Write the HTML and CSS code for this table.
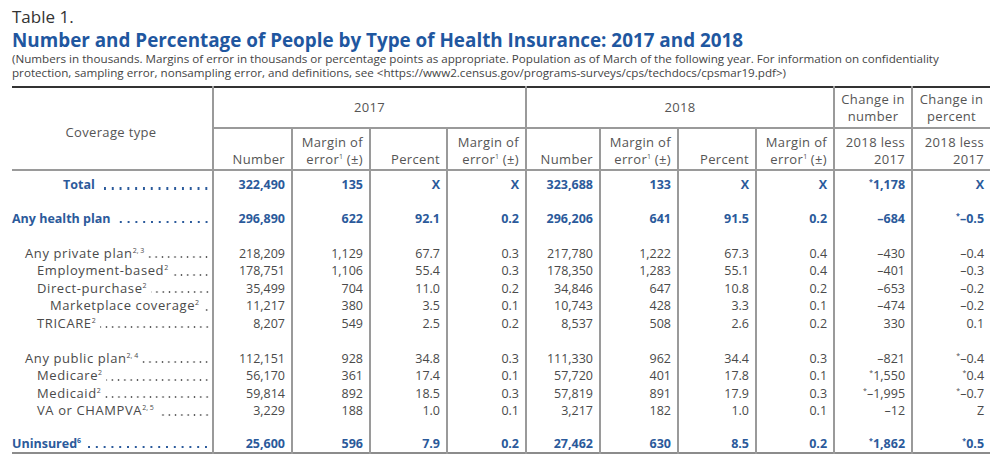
FILE: index.html
```html
<!DOCTYPE html>
<html lang="en">
<head>
<meta charset="utf-8">
<title>Table 1</title>
<link rel="stylesheet" href="styles.css">
</head>
<body>
<div class="page">
  <div class="tnum">Table 1.</div>
  <h1 class="title">Number and Percentage of People by Type of Health Insurance: 2017 and 2018</h1>
  <p class="sub">(Numbers in thousands. Margins of error in thousands or percentage points as appropriate. Population as of March of the following year. For information on confidentiality<br>protection, sampling error, nonsampling error, and definitions, see &lt;https://www2.census.gov/programs-surveys/cps/techdocs/cpsmar19.pdf&gt;)</p>
  <table class="t">
    <colgroup>
      <col class="c-lab"><col class="c79"><col class="c78"><col class="c77"><col class="c79"><col class="c74"><col class="c78"><col class="c78"><col class="c78"><col class="c78"><col class="c78">
    </colgroup>
    <thead>
      <tr class="h1">
        <th rowspan="2" class="cov">Coverage type</th>
        <th colspan="4" class="yr">2017</th>
        <th colspan="4" class="yr">2018</th>
        <th class="yr">Change in<br>number</th>
        <th class="yr">Change in<br>percent</th>
      </tr>
      <tr class="h2">
        <th>Number</th>
        <th>Margin of<br>error<sup>1</sup> (±)</th>
        <th>Percent</th>
        <th>Margin of<br>error<sup>1</sup> (±)</th>
        <th>Number</th>
        <th>Margin of<br>error<sup>1</sup> (±)</th>
        <th>Percent</th>
        <th>Margin of<br>error<sup>1</sup> (±)</th>
        <th>2018 less<br>2017</th>
        <th>2018 less<br>2017</th>
      </tr>
    </thead>
    <tbody>
      <tr class="b total">
        <td class="lab"><div class="lead i-total"><span class="txt">Total</span><span class="dots"></span></div></td>
        <td>322,490</td><td>135</td><td>X</td><td>X</td><td>323,688</td><td>133</td><td>X</td><td>X</td><td><sup>*</sup>1,178</td><td>X</td>
      </tr>
      <tr class="b gap1">
        <td class="lab"><div class="lead"><span class="txt">Any health plan</span><span class="dots"></span></div></td>
        <td>296,890</td><td>622</td><td>92.1</td><td>0.2</td><td>296,206</td><td>641</td><td>91.5</td><td>0.2</td><td>–684</td><td><sup>*</sup>–0.5</td>
      </tr>
      <tr class="gap2">
        <td class="lab"><div class="lead i1"><span class="txt">Any private plan<sup>2, 3</sup></span><span class="dots"></span></div></td>
        <td>218,209</td><td>1,129</td><td>67.7</td><td>0.3</td><td>217,780</td><td>1,222</td><td>67.3</td><td>0.4</td><td>–430</td><td>–0.4</td>
      </tr>
      <tr>
        <td class="lab"><div class="lead i2"><span class="txt">Employment-based<sup>2</sup></span><span class="dots"></span></div></td>
        <td>178,751</td><td>1,106</td><td>55.4</td><td>0.3</td><td>178,350</td><td>1,283</td><td>55.1</td><td>0.4</td><td>–401</td><td>–0.3</td>
      </tr>
      <tr>
        <td class="lab"><div class="lead i2"><span class="txt">Direct-purchase<sup>2</sup></span><span class="dots"></span></div></td>
        <td>35,499</td><td>704</td><td>11.0</td><td>0.2</td><td>34,846</td><td>647</td><td>10.8</td><td>0.2</td><td>–653</td><td>–0.2</td>
      </tr>
      <tr>
        <td class="lab"><div class="lead i3"><span class="txt">Marketplace coverage<sup>2</sup></span><span class="dots"></span></div></td>
        <td>11,217</td><td>380</td><td>3.5</td><td>0.1</td><td>10,743</td><td>428</td><td>3.3</td><td>0.1</td><td>–474</td><td>–0.2</td>
      </tr>
      <tr>
        <td class="lab"><div class="lead i2"><span class="txt">TRICARE<sup>2</sup></span><span class="dots"></span></div></td>
        <td>8,207</td><td>549</td><td>2.5</td><td>0.2</td><td>8,537</td><td>508</td><td>2.6</td><td>0.2</td><td>330</td><td>0.1</td>
      </tr>
      <tr class="gap3">
        <td class="lab"><div class="lead i1"><span class="txt">Any public plan<sup>2, 4</sup></span><span class="dots"></span></div></td>
        <td>112,151</td><td>928</td><td>34.8</td><td>0.3</td><td>111,330</td><td>962</td><td>34.4</td><td>0.3</td><td>–821</td><td><sup>*</sup>–0.4</td>
      </tr>
      <tr>
        <td class="lab"><div class="lead i2"><span class="txt">Medicare<sup>2</sup></span><span class="dots"></span></div></td>
        <td>56,170</td><td>361</td><td>17.4</td><td>0.1</td><td>57,720</td><td>401</td><td>17.8</td><td>0.1</td><td><sup>*</sup>1,550</td><td><sup>*</sup>0.4</td>
      </tr>
      <tr>
        <td class="lab"><div class="lead i2"><span class="txt">Medicaid<sup>2</sup></span><span class="dots"></span></div></td>
        <td>59,814</td><td>892</td><td>18.5</td><td>0.3</td><td>57,819</td><td>891</td><td>17.9</td><td>0.3</td><td><sup>*</sup>–1,995</td><td><sup>*</sup>–0.7</td>
      </tr>
      <tr>
        <td class="lab"><div class="lead i2"><span class="txt">VA or CHAMPVA<sup>2, 5</sup></span><span class="dots"></span></div></td>
        <td>3,229</td><td>188</td><td>1.0</td><td>0.1</td><td>3,217</td><td>182</td><td>1.0</td><td>0.1</td><td>–12</td><td>Z</td>
      </tr>
      <tr class="b gap4 last">
        <td class="lab"><div class="lead"><span class="txt">Uninsured<sup>6</sup></span><span class="dots"></span></div></td>
        <td>25,600</td><td>596</td><td>7.9</td><td>0.2</td><td>27,462</td><td>630</td><td>8.5</td><td>0.2</td><td><sup>*</sup>1,862</td><td><sup>*</sup>0.5</td>
      </tr>
    </tbody>
  </table>
</div>
</body>
</html>
```
FILE: styles.css
```css
html, body {
  margin: 0;
  padding: 0;
  background: #ffffff;
}
.page {
  padding: 6px 12px 0 12px;
  font-family: "Open Sans", "Liberation Sans", sans-serif;
  color: #4a4a4a;
}
.tnum {
  font-size: 17px;
  line-height: 22px;
  color: #333333;
}
.title {
  margin: 0;
  font-size: 18.85px;
  line-height: 24px;
  font-weight: 700;
  color: #1f57a0;
}
.sub {
  margin: 0 0 6px 0;
  font-size: 11.65px;
  line-height: 14px;
  color: #444444;
}
.t {
  width: 978px;
  table-layout: fixed;
  border-collapse: collapse;
  border-top: 2px solid #333333;
  border-bottom: 2px solid #8c8c8c;
  font-size: 12.5px;
}
.c-lab { width: 201px; }
.c79 { width: 79px; }
.c78 { width: 78px; }
.c77 { width: 77px; }
.c74 { width: 74px; }
.t th, .t td {
  padding-top: 0;
  padding-right: 6px;
  padding-bottom: 0;
  padding-left: 0;
  text-align: right;
  border-left: 2px solid #9a9a9a;
  white-space: nowrap;
}
.t th.cov, .t td.lab {
  border-left: none;
  padding-right: 2px;
}
.t th {
  font-weight: 400;
  color: #555555;
  line-height: 17px;
  font-size: 13px;
  letter-spacing: 0.35px;
}
.h1 th {
  height: 39px;
  text-align: center;
  padding-right: 0;
  border-bottom: 2px solid #9a9a9a;
}
.h1 th.cov {
  text-align: center;
  vertical-align: middle;
  padding-top: 8px;
}
.h2 th {
  height: 39px;
  vertical-align: bottom;
  padding-bottom: 1px;
}
thead {
  border-bottom: 2px solid #9a9a9a;
}
.t td {
  line-height: 17.5px;
  vertical-align: top;
  color: #4a4a4a;
}
.t td.lab {
  font-size: 13px;
  letter-spacing: 0.6px;
}
.t .b td.lab {
  font-size: 12.5px;
  letter-spacing: 0;
}
.t sup {
  font-size: 7px;
  line-height: 0;
  vertical-align: 5px;
  letter-spacing: 0;
}
.b td {
  font-weight: 700;
  color: #2b5a9b;
}
.t .total td { padding-top: 5px; }
.t .gap1 td { padding-top: 16px; }
.t .gap2 td { padding-top: 17.75px; }
.t .gap3 td { padding-top: 17.25px; }
.t .gap4 td { padding-top: 15px; }
.lead {
  display: flex;
  align-items: flex-end;
  height: 17.5px;
}
.txt {
  flex: none;
  white-space: nowrap;
}
.dots {
  flex: 1;
  height: 2px;
  margin: 0 0 4px 4px;
  background-image: radial-gradient(circle, #5a5a5a 0.75px, rgba(90, 90, 90, 0) 1.1px);
  background-size: 6.3px 2px;
  background-repeat: repeat-x;
  background-position: right bottom;
}
.b .dots {
  height: 2.4px;
  background-image: radial-gradient(circle, #2b5a9b 0.95px, rgba(43, 90, 155, 0) 1.3px);
  background-size: 7.8px 2.4px;
}
.i-total { padding-left: 51px; }
.i1 { padding-left: 13px; }
.i2 { padding-left: 25px; }
.i3 { padding-left: 38px; }
```
